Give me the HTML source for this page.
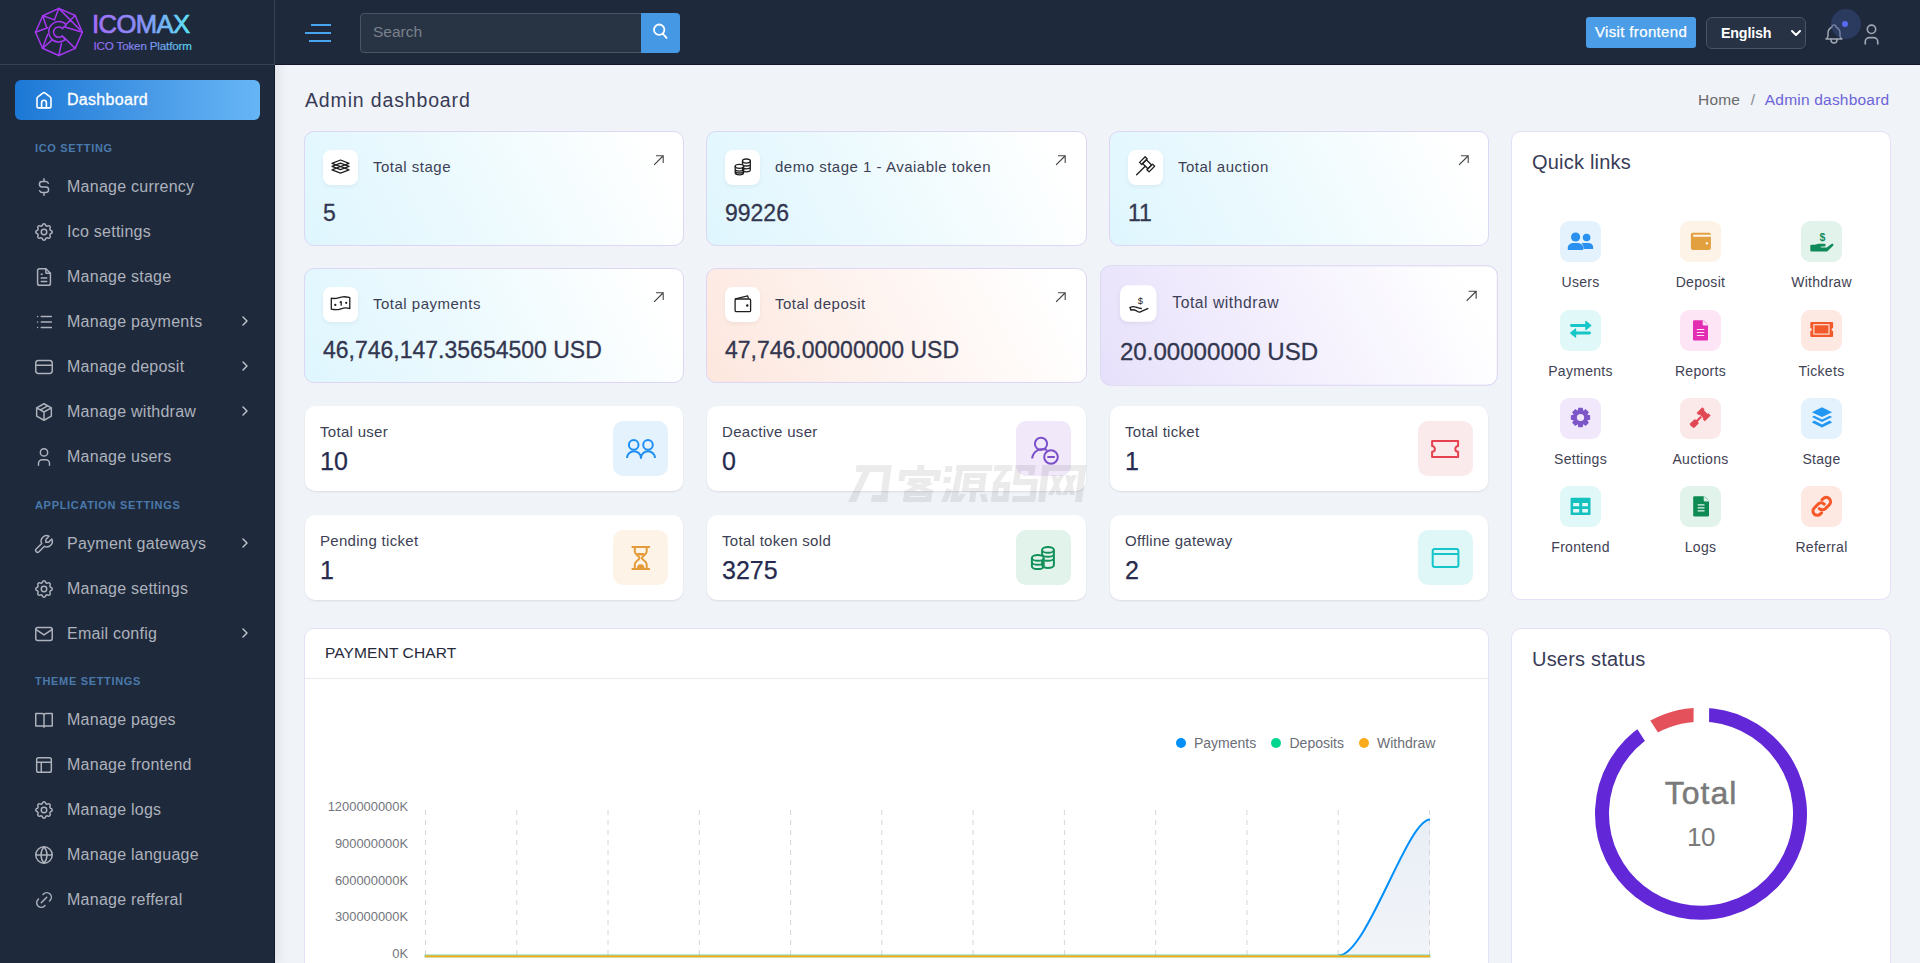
<!DOCTYPE html>
<html><head><meta charset="utf-8">
<style>
*{box-sizing:border-box;margin:0;padding:0}
html,body{width:1920px;height:963px;overflow:hidden}
body{font-family:"Liberation Sans",sans-serif;background:#f0f3f8;position:relative;color:#3b3f5c}
.abs{position:absolute}
#sidebar{position:absolute;left:0;top:0;width:275px;height:963px;background:#1e293b;border-right:1px solid #0f1728;box-shadow:2px 0 12px rgba(20,30,50,.10);z-index:0}
#topbar{position:absolute;left:275px;top:0;width:1645px;height:65px;background:#1e293b;border-bottom:1px solid #111827}
#logoarea{position:absolute;left:0;top:0;width:275px;height:65px;border-bottom:1px solid #364153;border-right:1px solid #364153}
.menu{position:absolute;left:35px;font-size:16px;color:#adb2bc;letter-spacing:0.25px;white-space:nowrap}
.menu .ic{position:absolute;left:-2px;top:-2px;width:22px;height:22px}
.menu span{position:absolute;left:32px;top:0;line-height:18px}
.chev{position:absolute;left:240px;width:10px;height:12px}
.sect{position:absolute;left:35px;font-size:11px;font-weight:bold;letter-spacing:.68px;color:#4a79ab;white-space:nowrap}
.card{position:absolute;border-radius:10px}
.c1{border:1px solid #ddd6f5;background:linear-gradient(62deg,#dff6fe 0%,#edfafe 45%,#ffffff 92%)}
.c1b{background:linear-gradient(62deg,#fde7de 0%,#fef3ef 45%,#ffffff 92%)}
.c1c{background:linear-gradient(62deg,#e7e0fb 0%,#f3effd 45%,#ffffff 92%)}
.c2{background:#fff;box-shadow:0 1px 2px rgba(30,40,70,.10)}
.ibox{position:absolute;width:35px;height:35px;background:#fff;border-radius:8px;box-shadow:0 2px 4px rgba(0,0,0,.05)}
.ctitle{position:absolute;font-size:15px;color:#3c3f55;white-space:nowrap;line-height:18px;letter-spacing:.5px}
.cval{position:absolute;font-size:23px;color:#33364f;white-space:nowrap;line-height:26px;-webkit-text-stroke:.3px #33364f}
.arrow{position:absolute;width:12px;height:12px}
.sbox{position:absolute;width:55px;height:55px;border-radius:10px}
.ql{position:absolute;width:120px;text-align:center;font-size:14px;color:#3f4254;letter-spacing:.3px}
.qbox{position:absolute;width:41px;height:41px;border-radius:9px}
.stitle{position:absolute;font-size:15px;line-height:18px;color:#3c3f55;letter-spacing:.3px;white-space:nowrap}
.sval{position:absolute;font-size:25px;line-height:28px;color:#262b4f;white-space:nowrap;-webkit-text-stroke:.25px #262b4f}
</style></head><body>

<!-- SIDEBAR -->
<div id="sidebar">
  <div id="logoarea"></div>
  <svg class="abs" style="left:0;top:0" width="274" height="64" viewBox="0 0 274 64">
  <defs>
   <linearGradient id="lg1" x1="92" y1="0" x2="190" y2="0" gradientUnits="userSpaceOnUse"><stop offset="0" stop-color="#a46cf8"/><stop offset=".5" stop-color="#8a8ff8"/><stop offset="1" stop-color="#5ae6f6"/></linearGradient>
   <linearGradient id="lg2" x1="93" y1="0" x2="190" y2="0" gradientUnits="userSpaceOnUse"><stop offset="0" stop-color="#9a66f2"/><stop offset=".55" stop-color="#7f8ff0"/><stop offset="1" stop-color="#5ad8ef"/></linearGradient>
  </defs>
  <g fill="none" stroke="#a638f2" stroke-width="1.5" stroke-linejoin="round" stroke-linecap="round">
    <path d="M58.8 8.4L75.2 15.5L82.3 32.2L75.2 48.4L58.8 55.5L42.5 48.2L35.5 32.2L42.8 15.7Z"/>
    <path d="M58.8 8.4L54.4 20M58.8 8.4L80 29.8M42.8 15.7L53.8 19.6M42.8 15.7L46.8 28.2M75.2 15.5L66.4 24M35.5 32.2L47.6 27.8M82.3 32.2L64.2 26.8M42.5 48.2L47.6 34.5M42.5 48.2L51.4 40.6M75.2 48.4L63.6 37M58.8 55.5L61.4 43.3"/>
    <path d="M66.3 24.8A10.2 10.2 0 1 0 65.3 39.7M62.6 28.6A5.2 5.2 0 1 0 62.3 35.9M66.3 24.8L62.6 28.6M62.3 35.9L65.3 39.7"/>
  </g>
  <text x="92" y="33.1" font-family="Liberation Sans" font-size="25.6" letter-spacing="-0.6" fill="url(#lg1)" stroke="url(#lg1)" stroke-width="0.7">ICOMAX</text>
  <text x="93.5" y="49.7" font-family="Liberation Sans" font-size="11.6" letter-spacing="-0.15" fill="url(#lg2)" stroke="url(#lg2)" stroke-width="0.15">ICO Token Platform</text>
</svg>
  <div class="abs" style="left:15px;top:80px;width:245px;height:40px;border-radius:6px;background:linear-gradient(90deg,#1c78d6,#4c9de8 60%,#66b6f6)"></div>
  <svg class="abs" style="left:34px;top:90px" width="20" height="20" viewBox="0 0 20 20" fill="none" stroke="#fff" stroke-width="1.6" stroke-linecap="round" stroke-linejoin="round"><path d="M3 8.6C3 7.9 3.3 7.3 3.9 6.9L8.8 3.1C9.5 2.6 10.5 2.6 11.2 3.1L16.1 6.9C16.7 7.3 17 7.9 17 8.6V16.5C17 17.3 16.4 17.9 15.6 17.9H4.4C3.6 17.9 3 17.3 3 16.5Z"/><path d="M7.6 17.9V12.6C7.6 11.3 8.7 10.3 10 10.3S12.4 11.3 12.4 12.6V17.9"/></svg>
  <div class="abs" style="left:67px;top:91px;font-size:16px;line-height:18px;color:#fff;letter-spacing:0.3px;-webkit-text-stroke:.3px #fff">Dashboard</div>
<div class="menu" style="top:178px"><svg class="ic" viewBox="0 0 24 24" fill="none" stroke="currentColor" stroke-width="1.6" stroke-linecap="round" stroke-linejoin="round"><path d="M16.7 8a3 3 0 0 0-2.7-2h-4a3 3 0 0 0 0 6h4a3 3 0 0 1 0 6h-4a3 3 0 0 1-2.7-2M12 3v3m0 12v3"/></svg><span>Manage currency</span></div>
<div class="menu" style="top:223px"><svg class="ic" viewBox="0 0 24 24" fill="none" stroke="currentColor" stroke-width="1.6" stroke-linecap="round" stroke-linejoin="round"><path d="M10.325 4.317c.426-1.756 2.924-1.756 3.35 0a1.724 1.724 0 0 0 2.573 1.066c1.543-.94 3.31.826 2.37 2.37a1.724 1.724 0 0 0 1.065 2.572c1.756.426 1.756 2.924 0 3.35a1.724 1.724 0 0 0-1.066 2.573c.94 1.543-.826 3.31-2.37 2.37a1.724 1.724 0 0 0-2.572 1.065c-.426 1.756-2.924 1.756-3.35 0a1.724 1.724 0 0 0-2.573-1.066c-1.543.94-3.31-.826-2.37-2.37a1.724 1.724 0 0 0-1.065-2.572c-1.756-.426-1.756-2.924 0-3.35a1.724 1.724 0 0 0 1.066-2.573c-.94-1.543.826-3.31 2.37-2.37c1 .608 2.296.07 2.572-1.065z"/><circle cx="12" cy="12" r="3"/></svg><span>Ico settings</span></div>
<div class="menu" style="top:268px"><svg class="ic" viewBox="0 0 24 24" fill="none" stroke="currentColor" stroke-width="1.6" stroke-linecap="round" stroke-linejoin="round"><path d="M14 3v4a1 1 0 0 0 1 1h4"/><path d="M17 21h-10a2 2 0 0 1-2-2v-14a2 2 0 0 1 2-2h7l5 5v11a2 2 0 0 1-2 2z"/><path d="M9 9h1M9 13h6M9 17h6"/></svg><span>Manage stage</span></div>
<div class="menu" style="top:313px"><svg class="ic" viewBox="0 0 24 24" fill="none" stroke="currentColor" stroke-width="1.6" stroke-linecap="round" stroke-linejoin="round"><path d="M9 6h11M9 12h11M9 18h11M5 6v.01M5 12v.01M5 18v.01"/></svg><span>Manage payments</span></div>
<svg class="chev" style="top:315px" viewBox="0 0 10 12" fill="none" stroke="#c4c8d0" stroke-width="1.4" stroke-linecap="round" stroke-linejoin="round"><path d="M3 2l4 4-4 4"/></svg>
<div class="menu" style="top:358px"><svg class="ic" viewBox="0 0 24 24" fill="none" stroke="currentColor" stroke-width="1.6" stroke-linecap="round" stroke-linejoin="round"><rect x="3" y="5" width="18" height="14" rx="3"/><path d="M3 10h18"/></svg><span>Manage deposit</span></div>
<svg class="chev" style="top:360px" viewBox="0 0 10 12" fill="none" stroke="#c4c8d0" stroke-width="1.4" stroke-linecap="round" stroke-linejoin="round"><path d="M3 2l4 4-4 4"/></svg>
<div class="menu" style="top:403px"><svg class="ic" viewBox="0 0 24 24" fill="none" stroke="currentColor" stroke-width="1.6" stroke-linecap="round" stroke-linejoin="round"><path d="M12 3l8 4.5v9l-8 4.5-8-4.5v-9l8-4.5M12 12l8-4.5M12 12v9M12 12L4 7.5M16 5.25l-8 4.5"/></svg><span>Manage withdraw</span></div>
<svg class="chev" style="top:405px" viewBox="0 0 10 12" fill="none" stroke="#c4c8d0" stroke-width="1.4" stroke-linecap="round" stroke-linejoin="round"><path d="M3 2l4 4-4 4"/></svg>
<div class="menu" style="top:448px"><svg class="ic" viewBox="0 0 24 24" fill="none" stroke="currentColor" stroke-width="1.6" stroke-linecap="round" stroke-linejoin="round"><path d="M8 7a4 4 0 1 0 8 0a4 4 0 0 0-8 0M6 21v-2a4 4 0 0 1 4-4h4a4 4 0 0 1 4 4v2"/></svg><span>Manage users</span></div>
<div class="menu" style="top:535px"><svg class="ic" viewBox="0 0 24 24" fill="none" stroke="currentColor" stroke-width="1.6" stroke-linecap="round" stroke-linejoin="round"><g transform="translate(24 0) scale(-1 1)"><path d="M7 10h3v-3l-3.5-3.5a6 6 0 0 1 8 8l6 6a2 2 0 0 1-3 3l-6-6a6 6 0 0 1-8-8l3.5 3.5"/></g></svg><span>Payment gateways</span></div>
<svg class="chev" style="top:537px" viewBox="0 0 10 12" fill="none" stroke="#c4c8d0" stroke-width="1.4" stroke-linecap="round" stroke-linejoin="round"><path d="M3 2l4 4-4 4"/></svg>
<div class="menu" style="top:580px"><svg class="ic" viewBox="0 0 24 24" fill="none" stroke="currentColor" stroke-width="1.6" stroke-linecap="round" stroke-linejoin="round"><path d="M10.325 4.317c.426-1.756 2.924-1.756 3.35 0a1.724 1.724 0 0 0 2.573 1.066c1.543-.94 3.31.826 2.37 2.37a1.724 1.724 0 0 0 1.065 2.572c1.756.426 1.756 2.924 0 3.35a1.724 1.724 0 0 0-1.066 2.573c.94 1.543-.826 3.31-2.37 2.37a1.724 1.724 0 0 0-2.572 1.065c-.426 1.756-2.924 1.756-3.35 0a1.724 1.724 0 0 0-2.573-1.066c-1.543.94-3.31-.826-2.37-2.37a1.724 1.724 0 0 0-1.065-2.572c-1.756-.426-1.756-2.924 0-3.35a1.724 1.724 0 0 0 1.066-2.573c-.94-1.543.826-3.31 2.37-2.37c1 .608 2.296.07 2.572-1.065z"/><circle cx="12" cy="12" r="3"/></svg><span>Manage settings</span></div>
<div class="menu" style="top:625px"><svg class="ic" viewBox="0 0 24 24" fill="none" stroke="currentColor" stroke-width="1.6" stroke-linecap="round" stroke-linejoin="round"><rect x="3" y="5" width="18" height="14" rx="2"/><path d="M3 7l9 6 9-6"/></svg><span>Email config</span></div>
<svg class="chev" style="top:627px" viewBox="0 0 10 12" fill="none" stroke="#c4c8d0" stroke-width="1.4" stroke-linecap="round" stroke-linejoin="round"><path d="M3 2l4 4-4 4"/></svg>
<div class="menu" style="top:711px"><svg class="ic" viewBox="0 0 24 24" fill="none" stroke="currentColor" stroke-width="1.6" stroke-linecap="round" stroke-linejoin="round"><path d="M3 5h7a2 2 0 0 1 2 2v13a1.5 1.5 0 0 0-1.5-1.5H3zM21 5h-7a2 2 0 0 0-2 2v13a1.5 1.5 0 0 1 1.5-1.5H21z"/></svg><span>Manage pages</span></div>
<div class="menu" style="top:756px"><svg class="ic" viewBox="0 0 24 24" fill="none" stroke="currentColor" stroke-width="1.6" stroke-linecap="round" stroke-linejoin="round"><rect x="4" y="4" width="16" height="16" rx="2"/><path d="M4 9h16M9 9v11"/></svg><span>Manage frontend</span></div>
<div class="menu" style="top:801px"><svg class="ic" viewBox="0 0 24 24" fill="none" stroke="currentColor" stroke-width="1.6" stroke-linecap="round" stroke-linejoin="round"><path d="M10.325 4.317c.426-1.756 2.924-1.756 3.35 0a1.724 1.724 0 0 0 2.573 1.066c1.543-.94 3.31.826 2.37 2.37a1.724 1.724 0 0 0 1.065 2.572c1.756.426 1.756 2.924 0 3.35a1.724 1.724 0 0 0-1.066 2.573c.94 1.543-.826 3.31-2.37 2.37a1.724 1.724 0 0 0-2.572 1.065c-.426 1.756-2.924 1.756-3.35 0a1.724 1.724 0 0 0-2.573-1.066c-1.543.94-3.31-.826-2.37-2.37a1.724 1.724 0 0 0-1.065-2.572c-1.756-.426-1.756-2.924 0-3.35a1.724 1.724 0 0 0 1.066-2.573c-.94-1.543.826-3.31 2.37-2.37c1 .608 2.296.07 2.572-1.065z"/><circle cx="12" cy="12" r="3"/></svg><span>Manage logs</span></div>
<div class="menu" style="top:846px"><svg class="ic" viewBox="0 0 24 24" fill="none" stroke="currentColor" stroke-width="1.6" stroke-linecap="round" stroke-linejoin="round"><circle cx="12" cy="12" r="9"/><path d="M3.6 12h16.8M12 3a14 14 0 0 1 0 18M12 3a14 14 0 0 0 0 18"/></svg><span>Manage language</span></div>
<div class="menu" style="top:891px"><svg class="ic" viewBox="0 0 24 24" fill="none" stroke="currentColor" stroke-width="1.6" stroke-linecap="round" stroke-linejoin="round"><path d="M9 15l6-6M11 6l.463-.536a5 5 0 0 1 7.071 7.072l-.534.464M13 18l-.397.534a5.068 5.068 0 0 1-7.127 0a4.972 4.972 0 0 1 0-7.071l.524-.463"/></svg><span>Manage refferal</span></div>
<div class="sect" style="top:141px;line-height:14px">ICO SETTING</div>
<div class="sect" style="top:498px;line-height:14px">APPLICATION SETTINGS</div>
<div class="sect" style="top:674px;line-height:14px">THEME SETTINGS</div>
</div>
<div id="topbar"></div>
<div class="abs" style="left:311px;top:24px;width:20px;height:2px;background:#4aa3ee"></div>
<div class="abs" style="left:305px;top:32px;width:26px;height:2px;background:#4aa3ee"></div>
<div class="abs" style="left:309px;top:40px;width:22px;height:2px;background:#4aa3ee"></div>
<div class="abs" style="left:360px;top:13px;width:282px;height:40px;background:#283444;border:1px solid #4a5464;border-radius:4px 0 0 4px"></div>
<div class="abs" style="left:373px;top:23px;font-size:15.5px;line-height:18px;color:#7a818d;letter-spacing:0px">Search</div>
<div class="abs" style="left:641px;top:13px;width:39px;height:40px;background:#4599e4;border-radius:0 4px 4px 0"></div>
<svg class="abs" style="left:650px;top:21px" width="22" height="22" viewBox="650 21 22 22" fill="none" stroke="#fff" stroke-width="1.8" stroke-linecap="round"><circle cx="659.2" cy="29.7" r="5.2"/><path d="M663 33.8L666.5 37.8"/></svg>
<div class="abs" style="left:1586px;top:17px;width:110px;height:31px;background:#4a9de6;border-radius:3px"></div>
<div class="abs" style="left:1595px;top:23px;font-size:15px;line-height:18px;color:#fff;letter-spacing:.35px;-webkit-text-stroke:.25px #fff">Visit frontend</div>
<div class="abs" style="left:1706px;top:17px;width:100px;height:32px;background:#273244;border:1px solid #4a5466;border-radius:6px"></div>
<div class="abs" style="left:1721px;top:24px;font-size:14.3px;line-height:18px;color:#fff;font-weight:bold;letter-spacing:-.2px">English</div>
<svg class="abs" style="left:1789px;top:28px" width="14" height="10" viewBox="0 0 14 10" fill="none" stroke="#fff" stroke-width="2" stroke-linecap="round" stroke-linejoin="round"><path d="M3 3l4 4 4-4"/></svg>
<svg class="abs" style="left:1822px;top:22px" width="24" height="24" viewBox="0 0 24 24" fill="none" stroke="#a0a6b2" stroke-width="1.5" stroke-linecap="round" stroke-linejoin="round"><path d="M10 5a2 2 0 1 1 4 0a7 7 0 0 1 4 6v3a4 4 0 0 0 2 3h-16a4 4 0 0 0 2-3v-3a7 7 0 0 1 4-6"/><path d="M9 17v1a3 3 0 0 0 6 0v-1"/></svg>
<div class="abs" style="left:1831px;top:9px;width:30px;height:30px;border-radius:50%;background:rgba(60,80,140,.45)"></div>
<div class="abs" style="left:1842px;top:21px;width:6px;height:6px;border-radius:50%;background:#5b6af0"></div>
<svg class="abs" style="left:1859px;top:22px" width="25" height="25" viewBox="0 0 24 24" fill="none" stroke="#a0a6b2" stroke-width="1.6" stroke-linecap="round" stroke-linejoin="round"><path d="M8 7a4 4 0 1 0 8 0a4 4 0 0 0-8 0M6 21v-2a4 4 0 0 1 4-4h4a4 4 0 0 1 4 4v2"/></svg>


<!--MAIN-->
<div class="abs" style="left:305px;top:89px;font-size:19.5px;line-height:22px;color:#383b57;letter-spacing:.85px">Admin dashboard</div>
<div class="abs" style="left:1698px;top:91px;font-size:15.5px;line-height:18px;color:#6a6a6a;letter-spacing:.2px;white-space:nowrap">Home <span style="color:#8a8a8a;margin:0 6px">/</span> <span style="color:#6b63d9">Admin dashboard</span></div>
<div class="card c1 c1" style="left:304px;top:131px;width:380px;height:115px"><div class="ibox" style="left:18px;top:18px"><svg width="35" height="35" viewBox="0 0 35 35" fill="none" stroke="#1f1f1f" stroke-width="1.3" stroke-linecap="round" stroke-linejoin="round"><path d="M9 13.3L17.5 10L26 13.3L17.5 16.6Z"/><path d="M9 16.4L17.5 13.1L26 16.4L17.5 19.7Z"/><path d="M9 19.8L17.5 16.5L26 19.8L17.5 23.1Z"/></svg></div><div class="ctitle" style="left:68px;top:26px">Total stage</div><div class="cval" style="left:18px;top:68px">5</div><svg class="abs" style="left:348px;top:22px" width="12" height="12" viewBox="0 0 12 12" fill="none" stroke="#454545" stroke-width="1.1" stroke-linecap="square"><path d="M1.5 10.5L10 2M3.5 1.8H10.2V8.5"/></svg></div>
<div class="card c1 c1" style="left:706px;top:131px;width:381px;height:115px"><div class="ibox" style="left:18px;top:18px"><svg width="35" height="35" viewBox="0 0 35 35" fill="none" stroke="#1f1f1f" stroke-width="1.3" stroke-linecap="round" stroke-linejoin="round"><ellipse cx="21.4" cy="11.1" rx="3.9" ry="2.1"/><path d="M17.5 11.1V19.7C17.5 20.9 19.2 21.8 21.4 21.8S25.3 20.9 25.3 19.7V11.1M17.5 13.9C17.5 15.1 19.2 16 21.4 16S25.3 15.1 25.3 13.9M18.6 18.5C19.4 18.7 20.3 18.9 21.4 18.9C23.6 18.9 25.3 18 25.3 16.8"/><ellipse cx="14.4" cy="16.3" rx="4.2" ry="2" fill="#fff"/><path d="M10.2 16.3V22.7C10.2 23.9 12.1 24.8 14.4 24.8S18.6 23.9 18.6 22.7V16.3M10.2 19C10.2 20.2 12.1 21.1 14.4 21.1S18.6 20.2 18.6 19M10.2 21C10.2 22.2 12.1 23 14.4 23S18.6 22.2 18.6 21"/></svg></div><div class="ctitle" style="left:68px;top:26px">demo stage 1 - Avaiable token</div><div class="cval" style="left:18px;top:68px">99226</div><svg class="abs" style="left:348px;top:22px" width="12" height="12" viewBox="0 0 12 12" fill="none" stroke="#454545" stroke-width="1.1" stroke-linecap="square"><path d="M1.5 10.5L10 2M3.5 1.8H10.2V8.5"/></svg></div>
<div class="card c1 c1" style="left:1109px;top:131px;width:380px;height:115px"><div class="ibox" style="left:18px;top:18px"><svg width="35" height="35" viewBox="0 0 35 35" fill="none" stroke="#1f1f1f" stroke-width="1.3" stroke-linecap="round" stroke-linejoin="round"><g transform="translate(19.1 14.3) rotate(45)"><path d="M-6.7 -3.95H-3.7V3.95H-6.7Z"/><path d="M3.7 -3.95H6.7V3.95H3.7Z"/><path d="M-3.7 -2.65H3.7V2.65H-3.7Z"/><path d="M0 2.65V14.8"/></g></svg></div><div class="ctitle" style="left:68px;top:26px">Total auction</div><div class="cval" style="left:18px;top:68px">11</div><svg class="abs" style="left:348px;top:22px" width="12" height="12" viewBox="0 0 12 12" fill="none" stroke="#454545" stroke-width="1.1" stroke-linecap="square"><path d="M1.5 10.5L10 2M3.5 1.8H10.2V8.5"/></svg></div>
<div class="card c1 c1" style="left:304px;top:268px;width:380px;height:115px"><div class="ibox" style="left:18px;top:18px"><svg width="35" height="35" viewBox="0 0 35 35" fill="none" stroke="#1f1f1f" stroke-width="1.3" stroke-linecap="round" stroke-linejoin="round"><path d="M8.3 11.2C13 12.5 16.5 10 20 9.8C23 9.6 25 10.2 26.8 10.6V21.6C24 20.6 21 20.7 18 21.8C14.5 23 11 22.8 8.3 22.2Z"/><circle cx="12.3" cy="17.9" r=".5" fill="#1f1f1f"/><circle cx="23.2" cy="15.8" r=".5" fill="#1f1f1f"/><path d="M17.2 15.3L18.2 14.6V18.2"/></svg></div><div class="ctitle" style="left:68px;top:26px">Total payments</div><div class="cval" style="left:18px;top:68px">46,746,147.35654500 USD</div><svg class="abs" style="left:348px;top:22px" width="12" height="12" viewBox="0 0 12 12" fill="none" stroke="#454545" stroke-width="1.1" stroke-linecap="square"><path d="M1.5 10.5L10 2M3.5 1.8H10.2V8.5"/></svg></div>
<div class="card c1 c1b" style="left:706px;top:268px;width:381px;height:115px"><div class="ibox" style="left:18px;top:18px"><svg width="35" height="35" viewBox="0 0 35 35" fill="none" stroke="#1f1f1f" stroke-width="1.3" stroke-linecap="round" stroke-linejoin="round"><rect x="10.1" y="12" width="15.5" height="12.7" rx="1.2"/><path d="M10.3 11.9L22.7 8.8L23.2 10.8"/><circle cx="22.3" cy="18.4" r=".6" fill="#1f1f1f"/></svg></div><div class="ctitle" style="left:68px;top:26px">Total deposit</div><div class="cval" style="left:18px;top:68px">47,746.00000000 USD</div><svg class="abs" style="left:348px;top:22px" width="12" height="12" viewBox="0 0 12 12" fill="none" stroke="#454545" stroke-width="1.1" stroke-linecap="square"><path d="M1.5 10.5L10 2M3.5 1.8H10.2V8.5"/></svg></div>
<div class="card c1 c1c" style="left:1109px;top:268px;width:380px;height:115px;transform:scale(1.047);transform-origin:50% 50%"><div class="ibox" style="left:18px;top:18px"><svg width="35" height="35" viewBox="0 0 35 35" fill="none" stroke="#1f1f1f" stroke-width="1.3" stroke-linecap="round" stroke-linejoin="round"><path d="M9.6 21.3C11.5 20.4 13.5 20.3 15 20.9C16.8 21.6 18.5 22.3 20.4 22.3"/><path d="M9.8 21.5L10.4 23.8C12.3 23 14 23.5 15.5 24.3C17 25.3 18 26.2 19.5 25.6C21.8 24.6 24.5 23.3 26.6 22.3"/><text x="19.6" y="18.3" text-anchor="middle" font-size="9" fill="#1f1f1f" stroke="none" font-family="Liberation Sans">$</text></svg></div><div class="ctitle" style="left:68px;top:26px">Total withdraw</div><div class="cval" style="left:18px;top:68px">20.00000000 USD</div><svg class="abs" style="left:348px;top:22px" width="12" height="12" viewBox="0 0 12 12" fill="none" stroke="#454545" stroke-width="1.1" stroke-linecap="square"><path d="M1.5 10.5L10 2M3.5 1.8H10.2V8.5"/></svg></div>
<div class="card c2" style="left:305px;top:406px;width:378px;height:85px"><div class="stitle" style="left:15px;top:17px">Total user</div><div class="sval" style="left:15px;top:41px">10</div><div class="sbox" style="left:308px;top:15px;background:#e3f2fd"><svg width="55" height="55" viewBox="0 0 55 55" fill="none" stroke="#1e8ff2" stroke-width="2" stroke-linecap="butt" stroke-linejoin="round"><circle cx="20.7" cy="23.9" r="4.8"/><circle cx="35" cy="23.9" r="4.8"/><path d="M14 37A7 6.8 0 0 1 28 37A7 6.8 0 0 1 42 37"/></svg></div></div>
<div class="card c2" style="left:707px;top:406px;width:379px;height:85px"><div class="stitle" style="left:15px;top:17px">Deactive user</div><div class="sval" style="left:15px;top:41px">0</div><div class="sbox" style="left:309px;top:15px;background:#f1e8fa"><svg width="55" height="55" viewBox="0 0 55 55" fill="none" stroke="#7b4fc9" stroke-width="2" stroke-linecap="butt" stroke-linejoin="round"><circle cx="25" cy="22.8" r="6.1"/><path d="M16.2 37.5A10.5 10.5 0 0 1 31 29"/><circle cx="35" cy="36" r="6.8"/><path d="M31.3 36H38.8"/></svg></div></div>
<div class="card c2" style="left:1110px;top:406px;width:378px;height:85px"><div class="stitle" style="left:15px;top:17px">Total ticket</div><div class="sval" style="left:15px;top:41px">1</div><div class="sbox" style="left:308px;top:15px;background:#fbeaeb"><svg width="55" height="55" viewBox="0 0 55 55" fill="none" stroke="#e5424f" stroke-width="2" stroke-linecap="butt" stroke-linejoin="round"><path d="M14.1 19.9H40.1V25.1A2.8 2.8 0 0 0 40.1 30.7V35.9H14.1V30.7A2.8 2.8 0 0 0 14.1 25.1Z"/></svg></div></div>
<div class="card c2" style="left:305px;top:515px;width:378px;height:85px"><div class="stitle" style="left:15px;top:17px">Pending ticket</div><div class="sval" style="left:15px;top:41px">1</div><div class="sbox" style="left:308px;top:15px;background:#fdf3e6"><svg width="55" height="55" viewBox="0 0 55 55" fill="none" stroke="#e39b3a" stroke-width="2" stroke-linecap="butt" stroke-linejoin="round"><path d="M18.6 17H36.9M18.6 39H36.9"/><path d="M21.8 17.5V21.5C21.8 25 26.6 26 26.6 28C26.6 30 21.8 31 21.8 34.5V38.5M33.7 17.5V21.5C33.7 25 28.9 26 28.9 28C28.9 30 33.7 31 33.7 34.5V38.5"/><path d="M24 23H31.4A3.7 2.6 0 0 1 24 23Z" fill="#e39b3a" stroke="none"/><path d="M23.9 38.5A3.8 4.3 0 0 1 31.5 38.5Z" fill="#e39b3a" stroke="none"/></svg></div></div>
<div class="card c2" style="left:707px;top:515px;width:379px;height:85px"><div class="stitle" style="left:15px;top:17px">Total token sold</div><div class="sval" style="left:15px;top:41px">3275</div><div class="sbox" style="left:309px;top:15px;background:#e2f3eb"><svg width="55" height="55" viewBox="0 0 55 55" fill="none" stroke="#11905a" stroke-width="2" stroke-linecap="butt" stroke-linejoin="round"><ellipse cx="32" cy="19.9" rx="5.9" ry="2.9"/><path d="M26.1 19.9V35C26.1 36.6 28.7 37.9 32 37.9S37.9 36.6 37.9 35V19.9M26.1 23.9C26.1 25.5 28.7 26.8 32 26.8S37.9 25.5 37.9 23.9M28.5 30.6C29.4 30.8 30.6 30.8 32 30.8C35.3 30.8 37.9 29.5 37.9 27.9"/><ellipse cx="21.8" cy="27.9" rx="5.9" ry="2.9" fill="#e2f3eb"/><path d="M15.9 27.9V36.2C15.9 37.8 18.5 39.1 21.8 39.1S27.7 37.8 27.7 36.2V27.9M15.9 31.9C15.9 33.5 18.5 34.8 21.8 34.8S27.7 33.5 27.7 31.9M15.9 35.9"/></svg></div></div>
<div class="card c2" style="left:1110px;top:515px;width:378px;height:85px"><div class="stitle" style="left:15px;top:17px">Offline gateway</div><div class="sval" style="left:15px;top:41px">2</div><div class="sbox" style="left:308px;top:15px;background:#e0f7f8"><svg width="55" height="55" viewBox="0 0 55 55" fill="none" stroke="#16c5c8" stroke-width="2" stroke-linecap="butt" stroke-linejoin="round"><rect x="14.7" y="18.9" width="25.7" height="18" rx="2"/><path d="M15.5 24H40"/></svg></div></div>
<div class="card" style="left:1511px;top:131px;width:380px;height:469px;background:#fff;border:1px solid #e4e0f6"></div>
<div class="abs" style="left:1532px;top:151px;font-size:20px;line-height:22px;color:#383b57;letter-spacing:.2px">Quick links</div>
<div class="qbox" style="left:1560px;top:221px;background:#e3f2fd"><svg width="41" height="41" viewBox="0 0 41 41" fill="#2a91f0" stroke="none"><circle cx="15.6" cy="16" r="4.6"/><circle cx="26.6" cy="16.5" r="3.8"/><path d="M7.8 28.9V26.6C7.8 24 10.6 22 13.8 22H17.2C20.4 22 23.2 24 23.2 26.6V28.9Z"/><path d="M23.6 27.9C23.6 25.5 22.9 23.5 21.5 22.3C22.3 22.1 23.2 22 24.2 22H28.3C31 22 33.1 23.6 33.1 25.6V27.9Z"/></svg></div>
<div class="ql" style="left:1520.5px;top:273.5px;line-height:16px">Users</div>
<div class="qbox" style="left:1680px;top:221px;background:#fdf3e6"><svg width="41" height="41" viewBox="0 0 41 41" fill="#e3a03f" stroke="none"><rect x="10.9" y="11.8" width="20" height="17.1" rx="1.8"/><rect x="13.2" y="13.7" width="17.7" height="2.1" fill="#fdf3e6"/><circle cx="26.9" cy="22.3" r="1.2" fill="#fdf3e6"/></svg></div>
<div class="ql" style="left:1640.5px;top:273.5px;line-height:16px">Deposit</div>
<div class="qbox" style="left:1801px;top:221px;background:#e2f3eb"><svg width="41" height="41" viewBox="0 0 41 41" fill="#0f8a5a" stroke="none"><path d="M9.3 25C9.3 24.3 9.9 23.8 10.6 23.8H13.6L17.6 22.8H23.3A1.3 1.3 0 0 1 23.3 25.4H19.8V26.4H25.8L30.4 23A1.2 1.2 0 0 1 32.1 24.7L26.7 29.9C26.3 30.3 25.8 30.5 25.2 30.5H10.3A1 1 0 0 1 9.3 29.5Z"/><text x="21.5" y="20.3" text-anchor="middle" font-size="10.5" font-weight="bold" font-family="Liberation Sans">$</text></svg></div>
<div class="ql" style="left:1761.5px;top:273.5px;line-height:16px">Withdraw</div>
<div class="qbox" style="left:1560px;top:310px;background:#e0f8f8"><svg width="41" height="41" viewBox="0 0 41 41" fill="#16c6c8" stroke="none"><path d="M11.5 15.5H27.5M29.5 23H13" stroke="#16c6c8" stroke-width="2.9" stroke-linecap="round"/><path d="M25.8 11.2L31.2 15.5L25.8 19.9Z M15.7 18.7L10.3 23L15.7 27.4Z" stroke="#16c6c8" stroke-width="1" stroke-linejoin="round"/></svg></div>
<div class="ql" style="left:1520.5px;top:362.5px;line-height:16px">Payments</div>
<div class="qbox" style="left:1680px;top:310px;background:#fde5f6"><svg width="41" height="41" viewBox="0 0 41 41" fill="#e32eb4" stroke="none"><path d="M14.2 10.2H23.5L28 14.7V29.3A1.2 1.2 0 0 1 26.8 30.5H14.2A1.2 1.2 0 0 1 13 29.3V11.4A1.2 1.2 0 0 1 14.2 10.2Z"/><path d="M23.2 10.2V15H28" fill="#fde5f6" stroke="#fde5f6" stroke-width=".9"/><path d="M16.8 19.5H24.2M16.8 22.5H24.2M16.8 25.5H24.2" stroke="#fde5f6" stroke-width="1.2"/></svg></div>
<div class="ql" style="left:1640.5px;top:362.5px;line-height:16px">Reports</div>
<div class="qbox" style="left:1801px;top:310px;background:#fde8e2"><svg width="41" height="41" viewBox="0 0 41 41" fill="#f25a2c" stroke="none"><path d="M10.3 11.9H31.1A1 1 0 0 1 32.1 12.9V17.9A1.5 1.5 0 0 0 32.1 20.9V25.9A1 1 0 0 1 31.1 26.9H10.3A1 1 0 0 1 9.3 25.9V20.9A1.5 1.5 0 0 0 9.3 17.9V12.9A1 1 0 0 1 10.3 11.9Z"/><rect x="12.9" y="14.7" width="15.1" height="9.4" fill="none" stroke="#fde8e2" stroke-width="1.1"/></svg></div>
<div class="ql" style="left:1761.5px;top:362.5px;line-height:16px">Tickets</div>
<div class="qbox" style="left:1560px;top:398px;background:#f1e9fb"><svg width="41" height="41" viewBox="0 0 41 41" fill="#7d57c7" stroke="none"><path d="M18.24 9.86 L22.76 9.86 L23.31 12.66 L23.35 12.67 L25.72 11.09 L28.91 14.28 L27.33 16.65 L27.34 16.69 L30.14 17.24 L30.14 21.76 L27.34 22.31 L27.33 22.35 L28.91 24.72 L25.72 27.91 L23.35 26.33 L23.31 26.34 L22.76 29.14 L18.24 29.14 L17.69 26.34 L17.65 26.33 L15.28 27.91 L12.09 24.72 L13.67 22.35 L13.66 22.31 L10.86 21.76 L10.86 17.24 L13.66 16.69 L13.67 16.65 L12.09 14.28 L15.28 11.09 L17.65 12.67 L17.69 12.66Z"/><circle cx="20.5" cy="19.5" r="3.6" fill="#f1e9fb"/></svg></div>
<div class="ql" style="left:1520.5px;top:450.5px;line-height:16px">Settings</div>
<div class="qbox" style="left:1680px;top:398px;background:#fbe9ea"><svg width="41" height="41" viewBox="0 0 41 41" fill="#e04853" stroke="none"><g transform="translate(23.6 16.3) rotate(45)"><path d="M-5.9 -4.1H-2.6V-3H2.6V-4.1H5.9V4.1H2.6V3H-2.6V4.1H-5.9Z"/><rect x="-1.1" y="3.5" width="2.2" height="7"/><rect x="-3" y="9.3" width="6" height="7.8" rx="1.3"/></g></svg></div>
<div class="ql" style="left:1640.5px;top:450.5px;line-height:16px">Auctions</div>
<div class="qbox" style="left:1801px;top:398px;background:#e3f2fd"><svg width="41" height="41" viewBox="0 0 41 41" fill="#2196f3" stroke="none"><path d="M21 9.3L31.1 14.2L21 19.1L10.9 14.2Z"/><path d="M13.2 17.8L21 21.6L28.8 17.8L31.1 19L21 24L10.9 19Z"/><path d="M13.2 22.6L21 26.4L28.8 22.6L31.1 24.5L21 29.4L10.9 24.5Z"/></svg></div>
<div class="ql" style="left:1761.5px;top:450.5px;line-height:16px">Stage</div>
<div class="qbox" style="left:1560px;top:486px;background:#e0f8f8"><svg width="41" height="41" viewBox="0 0 41 41" fill="#14c1bf" stroke="none"><rect x="10.6" y="11.7" width="19.9" height="17.3" rx=".8"/><path d="M13.1 17H19.2V20.3H13.1ZM22.2 17H27.9V20.3H22.2ZM13.1 23H19.2V26.6H13.1ZM22.2 23H27.9V26.6H22.2Z" fill="#e0f8f8"/></svg></div>
<div class="ql" style="left:1520.5px;top:538.5px;line-height:16px">Frontend</div>
<div class="qbox" style="left:1680px;top:486px;background:#e2f3eb"><svg width="41" height="41" viewBox="0 0 41 41" fill="#0e8a55" stroke="none"><path d="M14.4 10.2H24.5L29 14.7V29.3A1.2 1.2 0 0 1 27.8 30.5H14.4A1.2 1.2 0 0 1 13.2 29.3V11.4A1.2 1.2 0 0 1 14.4 10.2Z"/><path d="M24.2 10.2V15H29" fill="#e2f3eb" stroke="#e2f3eb" stroke-width=".9"/><path d="M17.7 18.8H24.5M17.7 21.8H24.5M17.7 24.8H24.5" stroke="#e2f3eb" stroke-width="1.2"/></svg></div>
<div class="ql" style="left:1640.5px;top:538.5px;line-height:16px">Logs</div>
<div class="qbox" style="left:1801px;top:486px;background:#fde8e2"><svg width="41" height="41" viewBox="0 0 41 41" fill="none" stroke="none"><g fill="none" stroke="#f6582a" stroke-width="3" stroke-linecap="round"><path d="M18.3 22.6a4.3 4.3 0 0 0 6.1 0l3.9-3.9a4.3 4.3 0 0 0-6.1-6.1l-1.2 1.2"/><path d="M23.2 18.1a4.3 4.3 0 0 0-6.1 0l-3.9 3.9a4.3 4.3 0 0 0 6.1 6.1l1.2-1.2"/></g></svg></div>
<div class="ql" style="left:1761.5px;top:538.5px;line-height:16px">Referral</div>
<div class="card" style="left:304px;top:628px;width:1185px;height:400px;background:#fff;border:1px solid #e4e0f6"></div>
<div class="abs" style="left:305px;top:678px;width:1183px;height:1px;background:#e9e9ef"></div>
<div class="abs" style="left:325px;top:644px;font-size:15.5px;line-height:18px;color:#262a3a;letter-spacing:.12px">PAYMENT CHART</div>
<div class="abs" style="left:1176px;top:738px;width:10px;height:10px;border-radius:50%;background:#008ffb"></div>
<div class="abs" style="left:1194px;top:735px;font-size:14px;line-height:16px;color:#6b6e76">Payments</div>
<div class="abs" style="left:1271px;top:738px;width:10px;height:10px;border-radius:50%;background:#00d68f"></div>
<div class="abs" style="left:1289.5px;top:735px;font-size:14px;line-height:16px;color:#6b6e76">Deposits</div>
<div class="abs" style="left:1359px;top:738px;width:10px;height:10px;border-radius:50%;background:#fbab19"></div>
<div class="abs" style="left:1377px;top:735px;font-size:14px;line-height:16px;color:#6b6e76">Withdraw</div>
<div class="abs" style="left:208px;width:200px;text-align:right;top:799px;font-size:12.9px;line-height:16px;color:#73767e">1200000000K</div>
<div class="abs" style="left:208px;width:200px;text-align:right;top:836px;font-size:12.9px;line-height:16px;color:#73767e">900000000K</div>
<div class="abs" style="left:208px;width:200px;text-align:right;top:872.5px;font-size:12.9px;line-height:16px;color:#73767e">600000000K</div>
<div class="abs" style="left:208px;width:200px;text-align:right;top:909px;font-size:12.9px;line-height:16px;color:#73767e">300000000K</div>
<div class="abs" style="left:208px;width:200px;text-align:right;top:945.5px;font-size:12.9px;line-height:16px;color:#73767e">0K</div>
<svg class="abs" style="left:0;top:0" width="1920" height="963" viewBox="0 0 1920 963"><defs><linearGradient id="ar" x1="0" y1="0" x2="0" y2="1"><stop offset="0" stop-color="#e3eaf3" stop-opacity=".8"/><stop offset="1" stop-color="#eef2f8" stop-opacity=".8"/></linearGradient></defs><path d="M1338.5 955.5C1366.9 955.5 1407.1 819.5 1430 819.5V955.5Z" fill="url(#ar)"/><path d="M425.5 810V955" stroke="#d6d6d6" stroke-width="1" stroke-dasharray="5 5"/><path d="M516.8 810V955" stroke="#d6d6d6" stroke-width="1" stroke-dasharray="5 5"/><path d="M608.0 810V955" stroke="#d6d6d6" stroke-width="1" stroke-dasharray="5 5"/><path d="M699.3 810V955" stroke="#d6d6d6" stroke-width="1" stroke-dasharray="5 5"/><path d="M790.6 810V955" stroke="#d6d6d6" stroke-width="1" stroke-dasharray="5 5"/><path d="M881.8 810V955" stroke="#d6d6d6" stroke-width="1" stroke-dasharray="5 5"/><path d="M973.1 810V955" stroke="#d6d6d6" stroke-width="1" stroke-dasharray="5 5"/><path d="M1064.4 810V955" stroke="#d6d6d6" stroke-width="1" stroke-dasharray="5 5"/><path d="M1155.7 810V955" stroke="#d6d6d6" stroke-width="1" stroke-dasharray="5 5"/><path d="M1246.9 810V955" stroke="#d6d6d6" stroke-width="1" stroke-dasharray="5 5"/><path d="M1338.2 810V955" stroke="#d6d6d6" stroke-width="1" stroke-dasharray="5 5"/><path d="M1429.5 810V955" stroke="#d6d6d6" stroke-width="1" stroke-dasharray="5 5"/><path d="M1338.5 955.5C1366.9 955.5 1407.1 819.5 1430 819.5" fill="none" stroke="#008ffb" stroke-width="2"/><path d="M424.5 956H1430.5" stroke="#5fc98a" stroke-width="3" opacity=".75"/><path d="M425 956.4H1430" stroke="#fbab19" stroke-width="1.6"/></svg>
<div class="card" style="left:1511px;top:628px;width:380px;height:400px;background:#fff;border:1px solid #e4e0f6"></div>
<div class="abs" style="left:1532px;top:648px;font-size:20px;line-height:22px;color:#383b57;letter-spacing:.2px">Users status</div>
<svg class="abs" style="left:0;top:0" width="1920" height="963" viewBox="0 0 1920 963"><path d="M1701.35 714.80A99 99 0 1 1 1647.44 730.54" fill="none" stroke="#6228d7" stroke-width="14"/><path d="M1647.44 730.54A99 99 0 0 1 1701.33 714.80" fill="none" stroke="#e5515b" stroke-width="14"/><path d="M1701.31 725.80L1701.38 703.80M1653.39 739.79L1641.49 721.29" stroke="#fff" stroke-width="15.5"/></svg>
<div class="abs" style="left:1601px;width:200px;text-align:center;top:775px;font-size:32px;line-height:36px;color:#7a7a7a;letter-spacing:1px;-webkit-text-stroke:.5px #7a7a7a">Total</div>
<div class="abs" style="left:1601px;width:200px;text-align:center;top:822px;font-size:26px;line-height:30px;color:#7a7a7a;letter-spacing:-.5px">10</div>
<svg class="abs" style="left:0;top:0" width="1920" height="963" viewBox="0 0 1920 963"><g fill="#000" opacity=".075"><g transform="translate(847 502) skewX(-7) translate(0 -37)"><rect x="5" y="0" width="35" height="7"/><rect x="33" y="0" width="7" height="37"/><rect x="24" y="30" width="16" height="7"/><path d="M12 7 L19 7 L9 37 L1 37Z"/></g><g transform="translate(895 502) skewX(-7) translate(0 -37)"><rect x="18" y="0" width="7" height="5"/><rect x="1" y="5" width="41" height="6"/><rect x="1" y="5" width="6" height="11"/><rect x="36" y="5" width="6" height="11"/><rect x="11" y="13" width="22" height="5"/><path d="M7 26 L30 16 L36 19 L13 28Z"/><path d="M13 16 L38 26 L34 29 L9 19Z"/><rect x="8" y="26" width="6" height="11"/><rect x="30" y="26" width="6" height="11"/><rect x="8" y="26" width="28" height="5"/><rect x="8" y="32" width="28" height="5"/></g><g transform="translate(941 502) skewX(-7) translate(0 -37)"><rect x="0" y="1" width="7" height="6"/><rect x="0" y="12" width="7" height="6"/><path d="M0 37 L4 23 L10 25 L6 37Z"/><rect x="11" y="0" width="36" height="6"/><path d="M12 6 L18 6 L16 37 L9 37Z"/><rect x="20" y="8" width="6" height="19"/><rect x="36" y="8" width="6" height="19"/><rect x="20" y="8" width="22" height="5"/><rect x="20" y="15" width="22" height="4"/><rect x="20" y="23" width="22" height="4"/><rect x="28" y="27" width="6" height="10"/><path d="M18 29 L24 29 L20 37 L14 37Z"/><path d="M38 29 L44 29 L47 37 L41 37Z"/></g><g transform="translate(990 502) skewX(-7) translate(0 -37)"><rect x="0" y="0" width="18" height="6"/><path d="M8 6 L14 6 L7 18 L1 18Z"/><rect x="1" y="17" width="6" height="20"/><rect x="12" y="17" width="6" height="20"/><rect x="1" y="17" width="17" height="6"/><rect x="1" y="31" width="17" height="6"/><rect x="21" y="0" width="20" height="6"/><rect x="35" y="0" width="6" height="10"/><rect x="21" y="0" width="6" height="20"/><rect x="21" y="14" width="24" height="6"/><rect x="39" y="14" width="6" height="23"/><rect x="22" y="31" width="23" height="6"/></g><g transform="translate(1038 502) skewX(-7) translate(0 -37)"><rect x="0" y="0" width="7" height="37"/><rect x="0" y="0" width="44" height="6"/><rect x="37" y="0" width="7" height="37"/><path d="M10 10 L15 10 L23 30 L18 30Z"/><path d="M18 10 L23 10 L14 30 L9 30Z"/><path d="M24 10 L29 10 L36 30 L31 30Z"/><path d="M31 10 L36 10 L28 30 L23 30Z"/></g></g></svg>
<!--ENDMAIN-->
</body></html>
